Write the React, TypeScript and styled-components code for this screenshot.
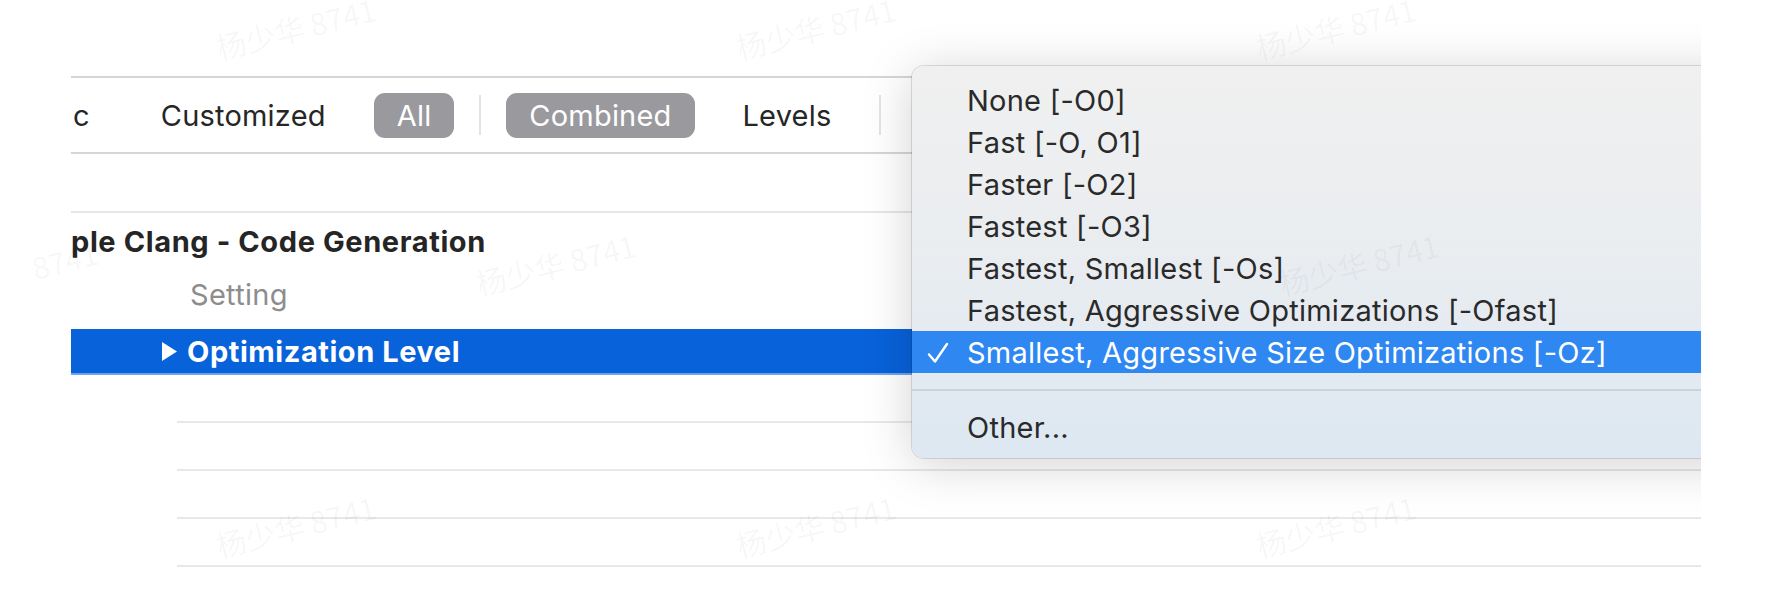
import React from "react";
import styled, { createGlobalStyle } from "styled-components";

const GlobalStyle = createGlobalStyle`
  body {
    margin: 0;
    background: #ffffff;
    font-family: Inter, "Noto Sans", "Liberation Sans", sans-serif;
  }
`;

const filters = [
  { label: "c", active: false, first: true },
  { label: "Customized", active: false },
  { label: "All", active: true },
  { divider: true },
  { label: "Combined", active: true },
  { label: "Levels", active: false },
  { divider: true },
];

const options = [
  "None [-O0]",
  "Fast [-O, O1]",
  "Faster [-O2]",
  "Fastest [-O3]",
  "Fastest, Smallest [-Os]",
  "Fastest, Aggressive Optimizations [-Ofast]",
  "Smallest, Aggressive Size Optimizations [-Oz]",
];

// watermark stamps over the screenshot
const marks = [
  { x: 220, y: 32, text: "杨少华 8741" },
  { x: 740, y: 32, text: "杨少华 8741" },
  { x: 1260, y: 32, text: "杨少华 8741" },
  { x: 36, y: 252, text: "8741" },
  { x: 480, y: 268, text: "杨少华 8741" },
  { x: 1283, y: 268, text: "杨少华 8741" },
  { x: 220, y: 530, text: "杨少华 8741" },
  { x: 740, y: 530, text: "杨少华 8741" },
  { x: 1260, y: 530, text: "杨少华 8741" },
];

const App: React.FC = () => {
  return (
    <Root>
      <GlobalStyle />
      <Pane>
        <FilterBar>
          {filters.map((f, i) =>
            f.divider ? (
              <Divider key={i} />
            ) : (
              <Segment key={i} $active={!!f.active} $first={!!f.first}>
                {f.label}
              </Segment>
            )
          )}
        </FilterBar>
        <GroupHeader>ple Clang - Code Generation</GroupHeader>
        <ColumnHead>Setting</ColumnHead>
        <SelectedRow>
          <Disclosure viewBox="0 0 17 21">
            <path d="M1 1 L16 10.5 L1 20 Z" fill="#ffffff" />
          </Disclosure>
          Optimization Level
        </SelectedRow>
        <EmptyRow />
        <EmptyRow />
        <EmptyRow />
        <EmptyRow />

        <Menu>
          {options.map((o, i) => (
            <MenuItem key={o} $selected={i === options.length - 1}>
              {i === options.length - 1 && (
                <Check viewBox="0 0 22 22">
                  <path
                    d="M2 12.5 L8 19.5 L20 2"
                    fill="none"
                    stroke="#ffffff"
                    strokeWidth="2.4"
                    strokeLinecap="round"
                    strokeLinejoin="round"
                  />
                </Check>
              )}
              {o}
            </MenuItem>
          ))}
          <MenuSeparator>
            <span />
          </MenuSeparator>
          <MenuItem $selected={false}>Other...</MenuItem>
        </Menu>
      </Pane>
      {marks.map((m, i) => (
        <Watermark key={i} style={{ left: m.x, top: m.y }}>
          {m.text}
        </Watermark>
      ))}
    </Root>
  );
};

export default App;

const Root = styled.div`
  position: relative;
  width: 1772px;
  height: 596px;
  overflow: hidden;
  background: #ffffff;
`;
const Pane = styled.div`
  position: relative;
  margin-left: 71px;
  width: 1630px;
  height: 596px;
  padding-top: 76px;
  box-sizing: border-box;
  overflow: hidden;
`;
const FilterBar = styled.div`
  display: flex;
  align-items: center;
  gap: 25px;
  height: 78px;
  box-sizing: border-box;
  border-top: 2px solid #d6d6d6;
  border-bottom: 2px solid #d6d6d6;
`;
const Segment = styled.div<{ $active: boolean; $first: boolean }>`
  height: 45px;
  line-height: 45px;
  padding: 0 23px 0 ${(p) => (p.$first ? "2px" : "23px")};
  border-radius: 11px;
  font-size: 29px;
  letter-spacing: 0.2px;
  color: ${(p) => (p.$active ? "#ffffff" : "#262626")};
  background: ${(p) => (p.$active ? "#9a9a9e" : "transparent")};
`;
const Divider = styled.div`
  width: 2px;
  height: 40px;
  background: #e4e4e4;
`;
const GroupHeader = styled.div`
  margin-top: 57px;
  height: 58px;
  box-sizing: border-box;
  border-top: 2px solid #e6e6e6;
  line-height: 58px;
  font-size: 29px;
  font-weight: 700;
  letter-spacing: 0.6px;
  color: #252525;
  white-space: nowrap;
`;
const ColumnHead = styled.div`
  height: 60px;
  box-sizing: border-box;
  padding: 8px 0 0 119px;
  line-height: 36px;
  font-size: 29px;
  letter-spacing: 0.3px;
  color: #8d8d8d;
`;
const SelectedRow = styled.div`
  display: flex;
  align-items: center;
  height: 46px;
  box-sizing: border-box;
  padding-left: 90px;
  background: #0862da;
  border-bottom: 2px solid #6ea4ea;
  font-size: 29px;
  font-weight: 700;
  letter-spacing: 0.55px;
  color: #ffffff;
`;
const Disclosure = styled.svg`
  width: 17px;
  height: 21px;
  margin-right: 9px;
`;
const EmptyRow = styled.div`
  margin-left: 106px;
  height: 48px;
  box-sizing: border-box;
  border-bottom: 2px solid #e8e8e8;
`;
const Menu = styled.div`
  position: absolute;
  left: 841px;
  top: 66px;
  width: 900px;
  padding: 13px 0 10px;
  box-sizing: border-box;
  border-radius: 12px;
  background: linear-gradient(180deg, #f0f0f0 0%, #eaedf0 45%, #dde8f2 100%);
  box-shadow: 0 0 0 1px rgba(0, 0, 0, 0.12), 0 6px 50px rgba(0, 0, 0, 0.18);
`;
const MenuItem = styled.div<{ $selected: boolean }>`
  position: relative;
  display: flex;
  align-items: center;
  height: 42px;
  padding-left: 55px;
  font-size: 29px;
  letter-spacing: 0.25px;
  color: ${(p) => (p.$selected ? "#ffffff" : "#2a2a2a")};
  background: ${(p) => (p.$selected ? "#2f87f1" : "transparent")};
  white-space: nowrap;
`;
const Check = styled.svg`
  position: absolute;
  left: 15px;
  top: 11px;
  width: 22px;
  height: 22px;
`;
const MenuSeparator = styled.div`
  display: flex;
  align-items: center;
  height: 33px;
  span {
    flex: 1;
    height: 2px;
    background: #cad2da;
  }
`;
const Watermark = styled.span`
  position: absolute;
  height: 30px;
  line-height: 30px;
  transform: rotate(-14deg);
  transform-origin: left bottom;
  font-family: "Noto Sans CJK SC", sans-serif;
  font-size: 30px;
  color: rgba(0, 0, 0, 0.045);
  white-space: nowrap;
  pointer-events: none;
`;
